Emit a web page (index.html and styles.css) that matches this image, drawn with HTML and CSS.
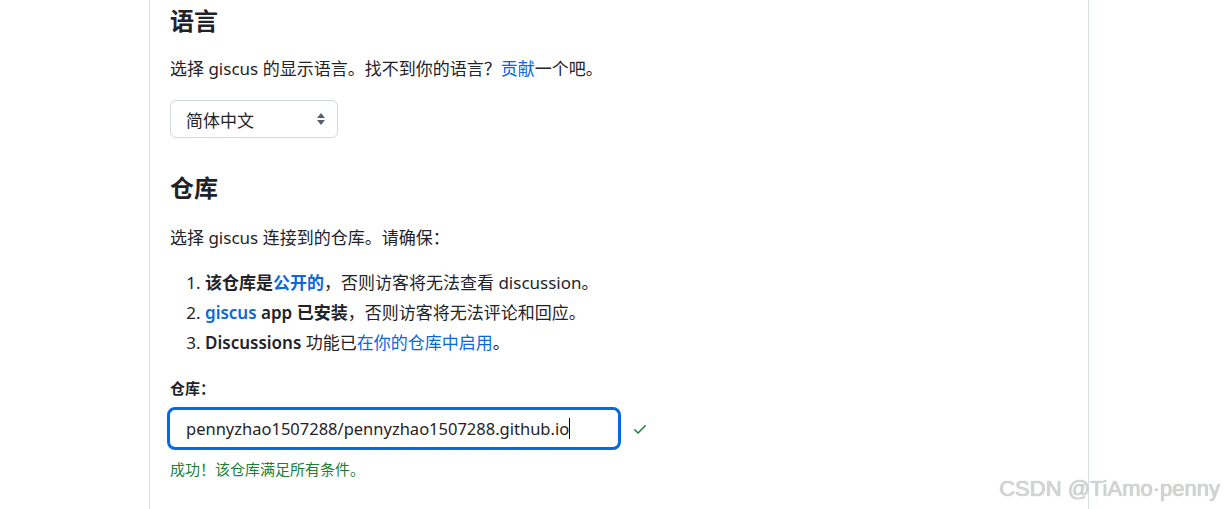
FILE: index.html
```html
<!DOCTYPE html>
<html lang="zh-CN">
<head>
<meta charset="utf-8">
<title>giscus</title>
<link rel="stylesheet" href="styles.css">
</head>
<body>
<div class="page">
  <h2 class="title first">语言</h2>
  <p class="desc">选择 giscus 的显示语言。找不到你的语言？<a href="#">贡献</a>一个吧。</p>
  <div class="select">
    <span>简体中文</span>
    <svg class="arrows" width="10" height="14" viewBox="0 0 10 14"><path d="M5 1 L9 6 H1 Z" fill="#57606a"/><path d="M5 13 L9 8 H1 Z" fill="#57606a"/></svg>
  </div>

  <h2 class="title second">仓库</h2>
  <p class="desc">选择 giscus 连接到的仓库。请确保：</p>
  <ol class="reqs">
    <li><b>该仓库是<a href="#">公开的</a></b>，否则访客将无法查看 discussion。</li>
    <li><b><a href="#">giscus</a> app 已安装</b>，否则访客将无法评论和回应。</li>
    <li><b>Discussions</b> 功能已<a href="#">在你的仓库中启用</a>。</li>
  </ol>
  <div class="label">仓库：</div>
  <div class="field-row">
    <div class="input"><span>pennyzhao1507288/pennyzhao1507288.github.io</span><span class="caret"></span></div>
    <svg class="check" width="16" height="16" viewBox="0 0 16 16"><path d="M13.78 4.22a.75.75 0 0 1 0 1.06l-7.25 7.25a.75.75 0 0 1-1.06 0L2.22 9.28a.75.75 0 0 1 1.06-1.06L6 10.94l6.72-6.72a.75.75 0 0 1 1.06 0Z" fill="#1a7f37"/></svg>
  </div>
  <div class="note">成功！该仓库满足所有条件。</div>
</div>
<div class="watermark">CSDN @TiAmo·penny</div>
</body>
</html>
```

FILE: styles.css
```css
html, body {
  margin: 0;
  padding: 0;
  background: #ffffff;
  height: 509px;
  overflow: hidden;
}
body {
  font-family: "Noto Sans", "Noto Sans CJK SC", sans-serif;
  color: #1f2328;
  font-size: 17px;
  position: relative;
}
.page {
  margin-left: 149px;
  width: 898px;
  height: 509px;
  border-left: 1px solid #d8dee4;
  border-right: 1px solid #d8dee4;
  padding: 0 20px;
}
.title {
  font-size: 24px;
  font-weight: 700;
  line-height: 30px;
  margin: 0;
}
.title.first { padding-top: 6px; }
.title.second { margin-top: 35px; }
.desc {
  margin: 21px 0 0;
  line-height: 24px;
}
.first + .desc { margin-top: 21px; }
.second + .desc { margin-top: 23px; }
a {
  color: #0969da;
  text-decoration: none;
}
.select {
  margin-top: 19px;
  width: 168px;
  height: 38px;
  box-sizing: border-box;
  border: 1px solid #d0d7de;
  border-radius: 6px;
  display: flex;
  align-items: center;
  justify-content: space-between;
  padding: 0 11px 0 15px;
}
.reqs {
  margin: 18px 0 0;
  padding-left: 35px;
  line-height: 30px;
}
.reqs b { font-weight: 600; }
.label {
  margin-top: 18px;
  font-size: 15px;
  font-weight: 600;
  line-height: 24px;
}
.field-row {
  margin-top: 7px;
  display: flex;
  align-items: center;
  gap: 11px;
}
.input {
  width: 454px;
  height: 43px;
  box-sizing: border-box;
  margin-left: -3px;
  border: 3px solid #0969da;
  border-radius: 8px;
  padding-left: 16px;
  display: flex;
  align-items: center;
  white-space: nowrap;
  font-size: 16.5px;
}
.caret {
  display: inline-block;
  width: 1px;
  height: 21px;
  background: #000;
}
.note {
  margin-top: 9px;
  font-size: 15px;
  line-height: 20px;
  color: #1a7f37;
}
.watermark {
  position: absolute;
  right: 4px;
  bottom: 7px;
  font-family: "Liberation Sans", Arial, sans-serif;
  font-size: 22px;
  color: #d4d4d4;
  text-shadow: 0 0 1px #a8a8a8;
}
```
